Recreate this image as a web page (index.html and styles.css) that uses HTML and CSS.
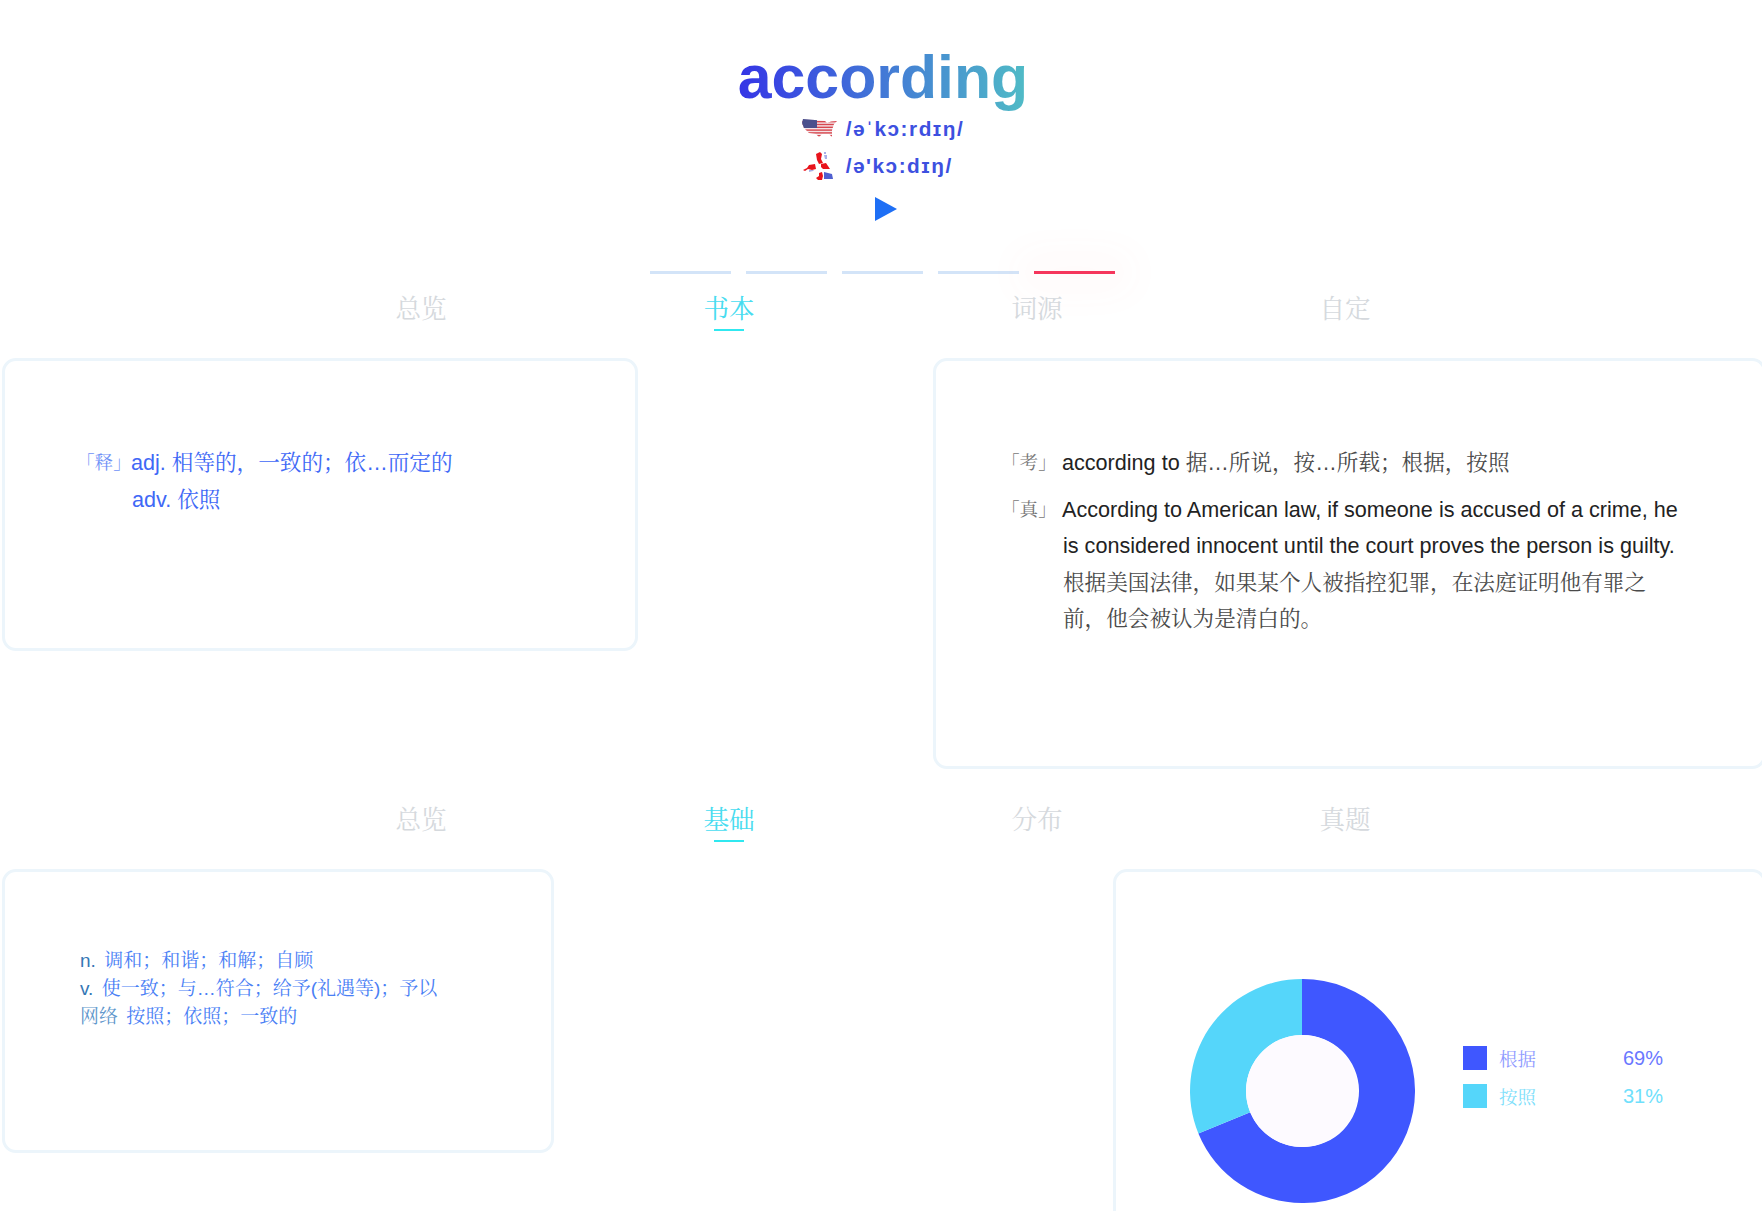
FILE: index.html
```html
<!DOCTYPE html>
<html lang="zh-CN">
	<head>
		<meta charset="utf-8">
		<title>according</title>
		<link rel="stylesheet" href="styles.css">
	</head>
	<body>
		<div class="page">
			<div class="head">
				<h1 class="word">according</h1>
				<div class="phons">
					<div class="phon">
						<svg class="flag" width="36" height="22" viewBox="0 0 36 22">
							<defs>
								<clipPath id="usmap">
									<path d="M1 1 L19 2.5 L23 3 L25 5 L29 3.5 L35 3 L32 6 L31 9 L30 12 L30 19 L27 16 L20 16 L17 19 L14 16 L7 15 L2 10 L0 5 Z"/>
								</clipPath>
							</defs>
							<g clip-path="url(#usmap)">
								<rect width="36" height="22" fill="#f3e3e6"/>
								<rect y="3" width="36" height="1.4" fill="#d8474f"/>
								<rect y="5.8" width="36" height="1.4" fill="#d8474f"/>
								<rect y="8.6" width="36" height="1.4" fill="#d8474f"/>
								<rect y="11.4" width="36" height="1.4" fill="#d8474f"/>
								<rect y="14.2" width="36" height="1.4" fill="#d8474f"/>
								<rect y="17" width="36" height="1.4" fill="#d8474f"/>
								<rect width="15" height="10" fill="#4a4f8c"/>
							</g>
						</svg>
						<span>/əˈkɔ:rdɪŋ/</span>
					</div>
					<div class="phon">
						<svg class="flag" width="36" height="30" viewBox="0 0 36 30">
							<path fill="#e8141c" d="M14 3 L18 1 L20 3 L19 8 L21 12 L17 13 L15 9 Z"/>
							<path fill="#e8141c" d="M1 19 L5 17 L7 14 L13 13 L14 18 L10 19 L6 18 L3 20 Z"/>
							<path fill="#e8141c" d="M19 13 L24 12 L28 18 L21 18 L19 16 Z"/>
							<path fill="#e8141c" d="M17 22 L20 21 L21 25 L20 29 L16 29 L14 27 L17 25 Z"/>
							<path fill="#5060d0" d="M22 21 L30 23 L31 28 L22 28 Z"/>
							<path fill="#a8b0e8" d="M22 1 L24 1 L24 3 L22 3 Z M22 4 L25 4 L25 8 L23 8 Z M7 19 L12 19 L11 20 L7 21 Z"/>
						</svg>
						<span>/ə'kɔ:dɪŋ/</span>
					</div>
				</div>
				<div class="play"></div>
			</div>

			<div class="steps">
				<span class="step"></span>
				<span class="step"></span>
				<span class="step"></span>
				<span class="step"></span>
				<span class="step step-on"></span>
			</div>

			<div class="tabs">
				<span class="tab">总览</span>
				<span class="tab tab-on">书本</span>
				<span class="tab">词源</span>
				<span class="tab">自定</span>
			</div>
			<div class="row">
				<div class="card card-shi">
					<div class="item">
						<span class="tag">「释」</span>
						<div class="item-body blue">
							<div>adj. 相等的，一致的；依…而定的</div>
							<div class="nudge">adv. 依照</div>
						</div>
					</div>
				</div>
				<div class="card card-zhen">
					<div class="item">
						<span class="tag tag-gray">「考」</span>
						<div class="item-body">
							<div class="dark">according to <span class="gray">据…所说，按…所载；根据，按照</span></div>
						</div>
					</div>
					<div class="item item-next">
						<span class="tag tag-gray">「真」</span>
						<div class="item-body">
							<div class="dark">According to American law, if someone is accused of a crime, he</div>
							<div class="dark nudge">is considered innocent until the court proves the person is guilty.</div>
							<div class="gray nudge trans">根据美国法律，如果某个人被指控犯罪，在法庭证明他有罪之前，他会被认为是清白的。</div>
						</div>
					</div>
				</div>
			</div>

			<div class="tabs tabs-two">
				<span class="tab">总览</span>
				<span class="tab tab-on">基础</span>
				<span class="tab">分布</span>
				<span class="tab">真题</span>
			</div>
			<div class="row">
				<div class="card card-base">
					<div class="base-line"><b>n.</b> 调和；和谐；和解；自顾</div>
					<div class="base-line"><b>v.</b> 使一致；与…符合；给予(礼遇等)；予以</div>
					<div class="base-line"><b class="net">网络</b> 按照；依照；一致的</div>
				</div>
				<div class="card card-chart">
					<svg class="donut" width="226" height="226" viewBox="-113 -113 226 226">
						<path fill="#3f57ff" d="M0 -112 A112 112 0 0 1 2 112 L2 56 A56 56 0 0 0 0 -56 Z"/>
						<path fill="#3f57ff" d="M2 112 A112 112 0 0 1 -103.6 42.5 L-51.8 21.2 A56 56 0 0 0 2 56 Z"/>
						<path fill="#55d6fa" d="M-103.6 42.5 A112 112 0 0 1 0 -112 L0 -56 A56 56 0 0 0 -51.8 21.2 Z"/>
						<circle r="56" fill="#fdfaff"/>
					</svg>
					<div class="legend">
						<div class="legend-row legend-a"><i></i><span class="legend-name">根据</span><span>69%</span></div>
						<div class="legend-row legend-b"><i></i><span class="legend-name">按照</span><span>31%</span></div>
					</div>
				</div>
			</div>
		</div>
	</body>
</html>
```

FILE: styles.css
```css
html, body {
	margin: 0;
	height: 1211px;
	overflow: hidden;
	background: #fff;
}
body {
	font-family: "Liberation Sans", "Noto Serif CJK SC", "Noto Sans CJK SC", sans-serif;
}
.page {
	width: 1766px;
}
.head {
	padding-top: 43px;
	display: flex;
	flex-direction: column;
	align-items: center;
}
.word {
	margin: 0;
	font-size: 60.8px;
	line-height: 68px;
	font-weight: bold;
	background: linear-gradient(90deg, #3535e6, #50bcc6);
	-webkit-background-clip: text;
	background-clip: text;
	color: transparent;
}
.phons {
	margin-top: 3px;
	display: flex;
	flex-direction: column;
	gap: 7px;
}
.phon {
	display: flex;
	align-items: center;
	gap: 8px;
	height: 30px;
	font-size: 20.8px;
	font-weight: bold;
	letter-spacing: 1.5px;
	color: #3d50e0;
}
.flag {
	width: 36px;
	flex: none;
}
.play {
	margin: 16px 0 0 6px;
	width: 0;
	height: 0;
	border-left: 22px solid #1e6ff5;
	border-top: 12px solid transparent;
	border-bottom: 12px solid transparent;
}
.steps {
	margin: 50px 0 0 -2px;
	display: flex;
	justify-content: center;
	gap: 15px;
}
.step {
	width: 81px;
	height: 3px;
	background: #d3e4f8;
}
.step-on {
	background: #f5365c;
	box-shadow: 0 0 40px 16px rgba(255, 110, 110, .04);
}
.tabs {
	margin: 18px auto 0;
	width: 1232px;
	display: grid;
	grid-template-columns: repeat(4, 1fr);
	text-align: center;
	font-size: 25.6px;
	line-height: 34px;
	color: #d5d9dd;
}
.tabs-two {
	margin-top: 34px;
}
.tab {
	position: relative;
	height: 39px;
}
.tab-on {
	color: #48dcf0;
}
.tab-on::after {
	content: "";
	position: absolute;
	left: 50%;
	bottom: 0;
	margin-left: -15px;
	width: 30px;
	height: 2px;
	background: #30e8f0;
}
.row {
	margin-top: 27px;
	padding-left: 2px;
	display: flex;
	justify-content: space-between;
	align-items: flex-start;
}
.card {
	box-sizing: border-box;
	border: 3px solid #ecf5fb;
	border-radius: 14px;
	background: #fff;
}
.card-shi {
	width: 636px;
	height: 293px;
	padding: 84px 0 0 71px;
}
.card-zhen {
	width: 833px;
	height: 411px;
	padding: 84px 0 0 65px;
}
.item {
	display: flex;
	align-items: flex-start;
	font-size: 21.6px;
	line-height: 36.5px;
}
.item-next {
	margin-top: 10px;
}
.tag {
	flex: none;
	width: 55px;
	font-size: 18.6px;
	color: #6f92f7;
}
.tag-gray {
	width: 61px;
	color: #777;
}
.blue {
	color: #4068f6;
}
.dark {
	color: #222;
}
.gray {
	color: #4a4a4a;
}
.nudge {
	margin-left: 1px;
}
.trans {
	max-width: 600px;
}
.card-base {
	width: 552px;
	height: 284px;
	padding: 75px 0 0 75px;
	font-size: 19px;
	line-height: 28px;
	color: #4a80f5;
}
.base-line b {
	font-weight: normal;
	color: #3477b5;
	margin-right: 3px;
}
.base-line b.net {
	color: #5f97cc;
}
.card-chart {
	width: 653px;
	height: 400px;
	padding: 106px 0 0 73px;
	display: flex;
	align-items: flex-start;
}
.legend {
	margin: 68px 0 0 48px;
	display: flex;
	flex-direction: column;
	gap: 14px;
}
.legend-row {
	display: flex;
	align-items: center;
	height: 24px;
	font-size: 20px;
}
.legend-row i {
	width: 24px;
	height: 24px;
	margin-right: 12px;
}
.legend-name {
	width: 124px;
	font-size: 18.5px;
}
.legend-a {
	color: #6a78ff;
}
.legend-a i {
	background: #3f57ff;
}
.legend-a .legend-name {
	color: #8f9bff;
}
.legend-b {
	color: #6fe0fc;
}
.legend-b i {
	background: #55d6fa;
}
.legend-b .legend-name {
	color: #7fe0fb;
}
```
